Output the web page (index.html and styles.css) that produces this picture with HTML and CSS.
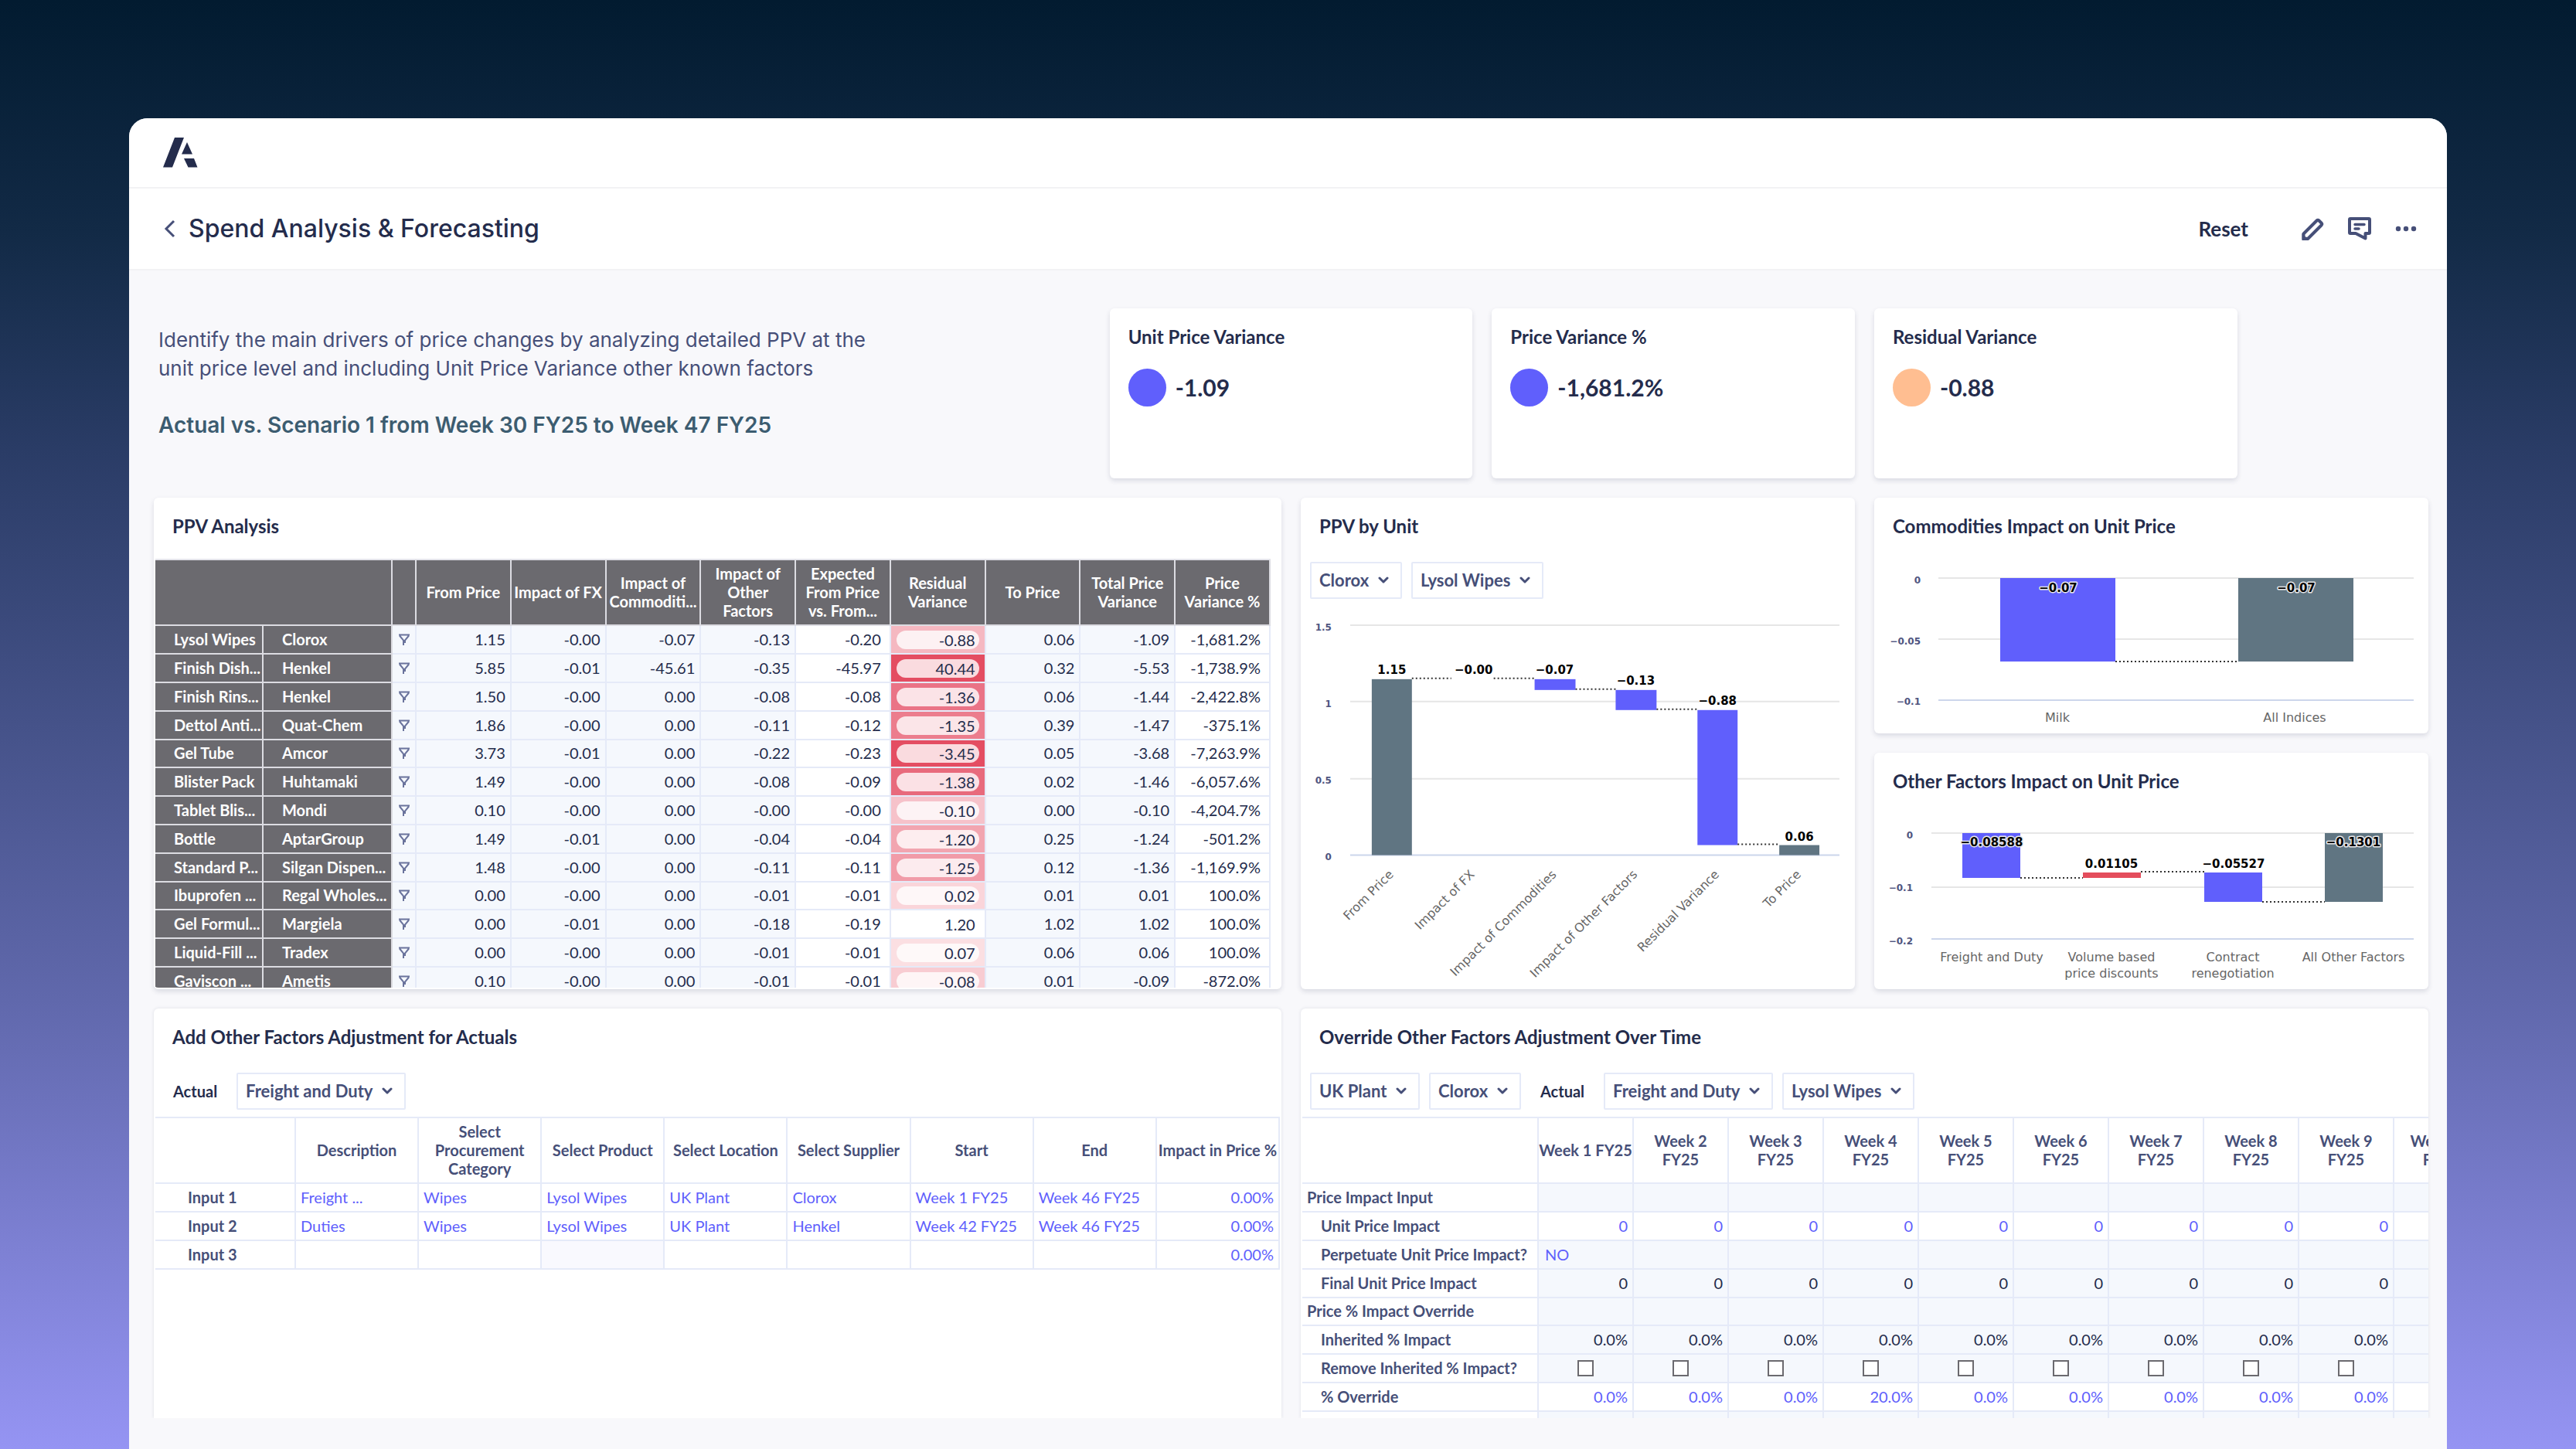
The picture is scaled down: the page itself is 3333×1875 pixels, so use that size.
FILE: index.html
```html
<!DOCTYPE html>
<html lang="en">
<head>
<meta charset="utf-8">
<meta name="viewport" content="width=device-width, initial-scale=1">
<title>Spend Analysis &amp; Forecasting</title>
<link rel="stylesheet" href="styles.css">
</head>
<body>
<svg class="sprite" aria-hidden="true">
  <symbol id="filter" viewBox="0 0 16 16"><path d="M1 1.5h14M2 2.5l5 6V15M14 2.5l-5 6V12" fill="none" stroke="currentColor" stroke-width="2"/></symbol>
  <symbol id="caret" viewBox="0 0 14 10"><path d="M2 2l5 5 5-5" fill="none" stroke="currentColor" stroke-width="3" stroke-linecap="round" stroke-linejoin="round"/></symbol>
</svg>
<div class="app">
  <header class="brand-bar">
    <a href="#" class="brand" aria-label="Home">
      <svg width="45" height="39" viewBox="0 0 45 39" fill="#242c4c"><path d="M15 0h12L12 38.500H0zM31 6l7 15.500H24zM27 27h13l4.500 11.500H32.500z"/></svg>
    </a>
  </header>
  <div class="title-bar">
    <button type="button" class="back" aria-label="Back">
      <svg width="16" height="24" viewBox="0 0 16 24"><path d="M13 2L3 12l10 10" fill="none" stroke="currentColor" stroke-width="3"/></svg>
    </button>
    <h1>Spend Analysis &amp; Forecasting</h1>
    <button type="button" class="reset">Reset</button>
    <button type="button" class="icon-button" aria-label="Edit">
      <svg width="32" height="32" viewBox="0 0 32 32"><path d="M3.500 29v-6.500L20.500 5.500q1.500-1.500 3 0l3 3q1.500 1.500 0 3L9.500 28.500z" fill="none" stroke="currentColor" stroke-width="4" stroke-linejoin="round"/><path d="M1.500 22v9h9z" fill="currentColor"/></svg>
    </button>
    <button type="button" class="icon-button" aria-label="Comments">
      <svg width="32" height="32" viewBox="0 0 32 32"><path d="M4 3h24q1 0 1 1v17q0 1-1 1h-4.500v6.500L11 22H4q-1 0-1-1V4q0-1 1-1z" fill="none" stroke="currentColor" stroke-width="4" stroke-linejoin="round"/><path d="M10 10.500h12M10 16h5" stroke="currentColor" stroke-width="3.500" stroke-linecap="round"/></svg>
    </button>
    <button type="button" class="icon-button" aria-label="More">
      <svg width="28" height="8" viewBox="0 0 28 8" fill="currentColor"><circle cx="4" cy="4" r="3.200"/><circle cx="14" cy="4" r="3.200"/><circle cx="24" cy="4" r="3.200"/></svg>
    </button>
  </div>
  <main class="board">
    <section class="intro">
      <p>Identify the main drivers of price changes by analyzing detailed PPV at the<br>unit price level and including Unit Price Variance other known factors</p>
      <p class="scope">Actual vs. Scenario 1 from Week 30 FY25 to Week 47 FY25</p>
    </section>
    <section class="card kpi">
      <h2>Unit Price Variance</h2>
      <p><span class="dot"></span>-1.09</p>
    </section>
    <section class="card kpi">
      <h2>Price Variance %</h2>
      <p><span class="dot"></span>-1,681.2%</p>
    </section>
    <section class="card kpi">
      <h2>Residual Variance</h2>
      <p><span class="dot warn"></span>-0.88</p>
    </section>

    <section class="card ppv">
      <h2>PPV Analysis</h2>
      <table class="grid ppv-grid">
        <colgroup><col class="c-item"><col class="c-vendor"><col class="c-filter"><col span="9"></colgroup>
        <thead>
          <tr><th colspan="2"></th><th></th><th>From Price</th><th>Impact of FX</th><th>Impact of<br>Commoditi...</th><th>Impact of<br>Other<br>Factors</th><th>Expected<br>From Price<br>vs. From...</th><th>Residual<br>Variance</th><th>To Price</th><th>Total Price<br>Variance</th><th>Price<br>Variance %</th></tr>
        </thead>
        <tbody>
          <tr><th>Lysol Wipes</th><th>Clorox</th><td><svg><use href="#filter"/></svg></td><td>1.15</td><td>-0.00</td><td>-0.07</td><td>-0.13</td><td>-0.20</td><td style="background:#f5b8c1"><span>-0.88</span></td><td>0.06</td><td>-1.09</td><td>-1,681.2%</td></tr>
          <tr><th>Finish Dish...</th><th>Henkel</th><td><svg><use href="#filter"/></svg></td><td>5.85</td><td>-0.01</td><td>-45.61</td><td>-0.35</td><td>-45.97</td><td style="background:#e44d62"><span>40.44</span></td><td>0.32</td><td>-5.53</td><td>-1,738.9%</td></tr>
          <tr><th>Finish Rins...</th><th>Henkel</th><td><svg><use href="#filter"/></svg></td><td>1.50</td><td>-0.00</td><td>0.00</td><td>-0.08</td><td>-0.08</td><td style="background:#ea7386"><span>-1.36</span></td><td>0.06</td><td>-1.44</td><td>-2,422.8%</td></tr>
          <tr><th>Dettol Anti...</th><th>Quat-Chem</th><td><svg><use href="#filter"/></svg></td><td>1.86</td><td>-0.00</td><td>0.00</td><td>-0.11</td><td>-0.12</td><td style="background:#ec7d8d"><span>-1.35</span></td><td>0.39</td><td>-1.47</td><td>-375.1%</td></tr>
          <tr><th>Gel Tube</th><th>Amcor</th><td><svg><use href="#filter"/></svg></td><td>3.73</td><td>-0.01</td><td>0.00</td><td>-0.22</td><td>-0.23</td><td style="background:#e44d62"><span>-3.45</span></td><td>0.05</td><td>-3.68</td><td>-7,263.9%</td></tr>
          <tr><th>Blister Pack</th><th>Huhtamaki</th><td><svg><use href="#filter"/></svg></td><td>1.49</td><td>-0.00</td><td>0.00</td><td>-0.08</td><td>-0.09</td><td style="background:#e86a7c"><span>-1.38</span></td><td>0.02</td><td>-1.46</td><td>-6,057.6%</td></tr>
          <tr><th>Tablet Blis...</th><th>Mondi</th><td><svg><use href="#filter"/></svg></td><td>0.10</td><td>-0.00</td><td>0.00</td><td>-0.00</td><td>-0.00</td><td style="background:#f6c2ca"><span>-0.10</span></td><td>0.00</td><td>-0.10</td><td>-4,204.7%</td></tr>
          <tr><th>Bottle</th><th>AptarGroup</th><td><svg><use href="#filter"/></svg></td><td>1.49</td><td>-0.01</td><td>0.00</td><td>-0.04</td><td>-0.04</td><td style="background:#f2a5b0"><span>-1.20</span></td><td>0.25</td><td>-1.24</td><td>-501.2%</td></tr>
          <tr><th>Standard P...</th><th>Silgan Dispen...</th><td><svg><use href="#filter"/></svg></td><td>1.48</td><td>-0.00</td><td>0.00</td><td>-0.11</td><td>-0.11</td><td style="background:#f19ba8"><span>-1.25</span></td><td>0.12</td><td>-1.36</td><td>-1,169.9%</td></tr>
          <tr><th>Ibuprofen ...</th><th>Regal Wholes...</th><td><svg><use href="#filter"/></svg></td><td>0.00</td><td>-0.00</td><td>0.00</td><td>-0.01</td><td>-0.01</td><td style="background:#fad5da"><span>0.02</span></td><td>0.01</td><td>0.01</td><td>100.0%</td></tr>
          <tr><th>Gel Formul...</th><th>Margiela</th><td><svg><use href="#filter"/></svg></td><td>0.00</td><td>-0.01</td><td>0.00</td><td>-0.18</td><td>-0.19</td><td style="background:#ffffff"><span>1.20</span></td><td>1.02</td><td>1.02</td><td>100.0%</td></tr>
          <tr><th>Liquid-Fill ...</th><th>Tradex</th><td><svg><use href="#filter"/></svg></td><td>0.00</td><td>-0.00</td><td>0.00</td><td>-0.01</td><td>-0.01</td><td style="background:#fbdfe2"><span>0.07</span></td><td>0.06</td><td>0.06</td><td>100.0%</td></tr>
          <tr><th>Gaviscon ...</th><th>Ametis</th><td><svg><use href="#filter"/></svg></td><td>0.10</td><td>-0.00</td><td>0.00</td><td>-0.01</td><td>-0.01</td><td style="background:#f8ccd2"><span>-0.08</span></td><td>0.01</td><td>-0.09</td><td>-872.0%</td></tr>
        </tbody>
      </table>
    </section>

    <section class="card unit">
      <h2>PPV by Unit</h2>
      <div class="selectors">
        <span class="picker"><select aria-label="Supplier"><option>Clorox</option></select><svg><use href="#caret"/></svg></span>
        <span class="picker"><select aria-label="Product"><option>Lysol Wipes</option></select><svg><use href="#caret"/></svg></span>
      </div>
      <svg class="chart" viewBox="0 0 718 505" role="img" aria-label="PPV by Unit waterfall">
        <g class="gridlines"><path d="M64 34h634M64 133h634M64 233h634"/><path class="axis" d="M64 332h634"/></g>
        <g class="ticks"><text x="40" y="41">1.5</text><text x="40" y="140">1</text><text x="40" y="239">0.5</text><text x="40" y="338">0</text></g>
        <g class="total"><rect x="92" y="104" width="52" height="228"/><rect x="620" y="319" width="52" height="13"/></g>
        <g class="delta"><rect x="303" y="104" width="53" height="14"/><rect x="408" y="118" width="53" height="26"/><rect x="514" y="144" width="52" height="175"/></g>
        <path class="links" d="M144 103h51M250 103h53M356 117h52M461 143h53M566 318h54"/>
        <g class="values"><text x="118" y="97">1.15</text><text x="224" y="97">−0.00</text><text x="329" y="97">−0.07</text><text x="434" y="111">−0.13</text><text x="540" y="137">−0.88</text><text x="646" y="313">0.06</text></g>
        <g class="slanted">
          <text transform="translate(121 358) rotate(-45)">From Price</text>
          <text transform="translate(226 358) rotate(-45)">Impact of FX</text>
          <text transform="translate(332 358) rotate(-45)">Impact of Commodities</text>
          <text transform="translate(437 358) rotate(-45)">Impact of Other Factors</text>
          <text transform="translate(543 358) rotate(-45)">Residual Variance</text>
          <text transform="translate(649 358) rotate(-45)">To Price</text>
        </g>
      </svg>
    </section>

    <section class="card commodities">
      <h2>Commodities Impact on Unit Price</h2>
      <svg class="chart" viewBox="0 0 717 252" role="img" aria-label="Commodities impact">
        <g class="gridlines"><path d="M83 51h615M83 130h615"/><path class="axis" d="M83 209h615"/></g>
        <g class="ticks"><text x="60" y="58">0</text><text x="60" y="137">−0.05</text><text x="60" y="215">−0.1</text></g>
        <g class="delta"><rect x="163" y="51" width="149" height="108"/></g>
        <g class="total"><rect x="471" y="51" width="149" height="108"/></g>
        <path class="links" d="M312 159h159"/>
        <g class="values halo"><text x="238" y="69">−0.07</text><text x="546" y="69">−0.07</text></g>
        <g class="names"><text x="237" y="237">Milk</text><text x="544" y="237">All Indices</text></g>
      </svg>
    </section>

    <section class="card factors">
      <h2>Other Factors Impact on Unit Price</h2>
      <svg class="chart" viewBox="0 0 717 252" role="img" aria-label="Other factors impact">
        <g class="gridlines"><path d="M74 51h624M74 121h624"/><path class="axis" d="M74 188h624"/></g>
        <g class="ticks"><text x="50" y="58">0</text><text x="50" y="126">−0.1</text><text x="50" y="195">−0.2</text></g>
        <g class="delta"><rect x="114" y="51" width="75" height="58"/><rect x="427" y="102" width="75" height="38"/></g>
        <rect class="rise" x="270" y="102" width="75" height="7"/>
        <g class="total"><rect x="583" y="51" width="75" height="89"/></g>
        <path class="links" d="M189 109h81M345 101h82M502 140h81"/>
        <g class="values"><text x="307" y="96">0.01105</text><text x="465" y="96">−0.05527</text></g>
        <g class="values halo"><text x="152" y="68">−0.08588</text><text x="620" y="68">−0.1301</text></g>
        <g class="names"><text x="152" y="217">Freight and Duty</text><text x="307" y="217">Volume based</text><text x="307" y="238">price discounts</text><text x="464" y="217">Contract</text><text x="464" y="238">renegotiation</text><text x="620" y="217">All Other Factors</text></g>
      </svg>
    </section>

    <section class="card adjust">
      <h2>Add Other Factors Adjustment for Actuals</h2>
      <div class="selectors">
        <label for="adjust-factor">Actual</label>
        <span class="picker"><select id="adjust-factor"><option>Freight and Duty</option></select><svg><use href="#caret"/></svg></span>
      </div>
      <table class="grid input-grid">
        <colgroup><col class="c-input"><col span="8"></colgroup>
        <thead>
          <tr><th></th><th>Description</th><th>Select<br>Procurement<br>Category</th><th>Select Product</th><th>Select Location</th><th>Select Supplier</th><th>Start</th><th>End</th><th>Impact in Price %</th></tr>
        </thead>
        <tbody>
          <tr><th>Input 1</th><td>Freight ...</td><td>Wipes</td><td>Lysol Wipes</td><td>UK Plant</td><td>Clorox</td><td>Week 1 FY25</td><td>Week 46 FY25</td><td>0.00%</td></tr>
          <tr><th>Input 2</th><td>Duties</td><td>Wipes</td><td>Lysol Wipes</td><td>UK Plant</td><td>Henkel</td><td>Week 42 FY25</td><td>Week 46 FY25</td><td>0.00%</td></tr>
          <tr><th>Input 3</th><td></td><td></td><td class="locked"></td><td></td><td></td><td></td><td></td><td>0.00%</td></tr>
        </tbody>
      </table>
    </section>

    <section class="card override">
      <h2>Override Other Factors Adjustment Over Time</h2>
      <div class="selectors">
        <span class="picker"><select aria-label="Plant"><option>UK Plant</option></select><svg><use href="#caret"/></svg></span>
        <span class="picker"><select aria-label="Supplier"><option>Clorox</option></select><svg><use href="#caret"/></svg></span>
        <label for="override-factor">Actual</label>
        <span class="picker"><select id="override-factor"><option>Freight and Duty</option></select><svg><use href="#caret"/></svg></span>
        <span class="picker"><select aria-label="Product"><option>Lysol Wipes</option></select><svg><use href="#caret"/></svg></span>
      </div>
      <table class="grid week-grid">
        <colgroup><col class="c-line"><col span="10" class="c-week"></colgroup>
        <thead>
          <tr><th></th><th>Week 1 FY25</th><th>Week 2<br>FY25</th><th>Week 3<br>FY25</th><th>Week 4<br>FY25</th><th>Week 5<br>FY25</th><th>Week 6<br>FY25</th><th>Week 7<br>FY25</th><th>Week 8<br>FY25</th><th>Week 9<br>FY25</th><th>Week 10<br>FY25</th></tr>
        </thead>
        <tbody>
          <tr class="group"><th>Price Impact Input</th><td></td><td></td><td></td><td></td><td></td><td></td><td></td><td></td><td></td><td></td></tr>
          <tr class="editable"><th>Unit Price Impact</th><td>0</td><td>0</td><td>0</td><td>0</td><td>0</td><td>0</td><td>0</td><td>0</td><td>0</td><td></td></tr>
          <tr><th>Perpetuate Unit Price Impact?</th><td class="flag">NO</td><td></td><td></td><td></td><td></td><td></td><td></td><td></td><td></td><td></td></tr>
          <tr><th>Final Unit Price Impact</th><td>0</td><td>0</td><td>0</td><td>0</td><td>0</td><td>0</td><td>0</td><td>0</td><td>0</td><td></td></tr>
          <tr class="group"><th>Price % Impact Override</th><td></td><td></td><td></td><td></td><td></td><td></td><td></td><td></td><td></td><td></td></tr>
          <tr><th>Inherited % Impact</th><td>0.0%</td><td>0.0%</td><td>0.0%</td><td>0.0%</td><td>0.0%</td><td>0.0%</td><td>0.0%</td><td>0.0%</td><td>0.0%</td><td></td></tr>
          <tr class="checks"><th>Remove Inherited % Impact?</th><td><input type="checkbox" aria-label="Week 1"></td><td><input type="checkbox" aria-label="Week 2"></td><td><input type="checkbox" aria-label="Week 3"></td><td><input type="checkbox" aria-label="Week 4"></td><td><input type="checkbox" aria-label="Week 5"></td><td><input type="checkbox" aria-label="Week 6"></td><td><input type="checkbox" aria-label="Week 7"></td><td><input type="checkbox" aria-label="Week 8"></td><td><input type="checkbox" aria-label="Week 9"></td><td></td></tr>
          <tr class="editable"><th>% Override</th><td>0.0%</td><td>0.0%</td><td>0.0%</td><td>20.0%</td><td>0.0%</td><td>0.0%</td><td>0.0%</td><td>0.0%</td><td>0.0%</td><td></td></tr>
          <tr><th></th><td></td><td></td><td></td><td></td><td></td><td></td><td></td><td></td><td></td><td></td></tr>
        </tbody>
      </table>
    </section>
  </main>
</div>
</body>
</html>
```

FILE: styles.css
```css
:root {
  --ink: #242c4c;
  --muted: #464f78;
  --accent: #605ffc;
  --slate: #607582;
  --red: #e44d5c;
  --line: #e5eaf8;
  --tint: #f5f8fd;
  --canvas: #f8f8fb;
}

* { box-sizing: border-box; }

body {
  margin: 0;
  min-height: 100vh;
  display: flex;
  padding: 153px 167px 0;
  background: linear-gradient(#021b30 0%, #122a46 16%, #2a3c66 31%, #6068ac 69%, #9594f3 100%);
  color: var(--ink);
  font-family: Lato, "Open Sans", sans-serif;
  font-size: 20px;
  line-height: 24px;
}

h1, h2, p { margin: 0; }

button, select { font: inherit; }

.sprite { position: absolute; width: 0; height: 0; }

.app {
  flex: 1;
  min-width: 0;
  background: var(--canvas);
  border-radius: 24px 24px 0 0;
  overflow: hidden;
}

.brand-bar {
  display: flex;
  align-items: center;
  height: 91px;
  padding: 0 44px;
  background: #fff;
  border-bottom: 2px solid #f2f2f4;
}

.brand { display: flex; }

.title-bar {
  display: flex;
  align-items: center;
  height: 106px;
  padding: 0 23px 0 45px;
  background: #fff;
  border-bottom: 2px solid #f2f2f4;
}

.title-bar button {
  display: flex;
  align-items: center;
  justify-content: center;
  border: 0;
  padding: 0;
  background: none;
  color: var(--muted);
}

.title-bar h1 {
  flex: 1;
  margin-left: 16px;
  font: 500 32px/40px Inter, sans-serif;
}

.title-bar .reset {
  margin-right: 54px;
  color: var(--ink);
  font-size: 26px;
  font-weight: 700;
  line-height: 32px;
}

.title-bar .icon-button { width: 60px; height: 60px; }

.board {
  display: grid;
  grid-template-columns: repeat(12, minmax(0, 1fr));
  grid-template-rows: 220px 305px 306px 530px;
  gap: 25px;
  padding: 49px 24px 40px 32px;
}

.intro {
  grid-column: span 5;
  padding: 22px 0 0 6px;
  color: var(--muted);
  font: 400 26px/37px Inter, sans-serif;
}

.intro .scope {
  margin-top: 37px;
  color: #3c5c70;
  font-size: 28px;
  font-weight: 600;
}

.card {
  overflow: hidden;
  padding-top: 21px;
  background: #fff;
  border-radius: 6px;
  box-shadow: 0 3px 6px rgba(36, 44, 76, 0.14);
}

.card h2 {
  padding: 0 24px;
  font-size: 24px;
  font-weight: 700;
  line-height: 32px;
}

.kpi { grid-column: span 2; }

.kpi p {
  display: flex;
  align-items: center;
  gap: 12px;
  margin: 25px 24px 0;
  font-size: 30px;
  font-weight: 700;
  line-height: 49px;
}

.dot {
  width: 49px;
  height: 49px;
  border-radius: 50%;
  background: var(--accent);
}

.dot.warn { background: #ffbe91; }

.ppv { grid-column: 1 / span 6; grid-row: 2 / span 2; padding-right: 14px; padding-left: 2px; border-bottom: 2px solid #fff; }
.unit { grid-column: 7 / span 3; grid-row: 2 / span 2; }
.commodities { grid-column: 10 / span 3; grid-row: 2; }
.factors { grid-column: 10 / span 3; grid-row: 3; }
.adjust { grid-column: 1 / span 6; grid-row: 4; }
.override { grid-column: 7 / span 6; grid-row: 4; }
.ppv h2 { padding-left: 22px; }

.adjust, .override {
  padding-right: 2px;
  padding-left: 2px;
  border-radius: 6px 6px 0 0;
  box-shadow: 0 0 4px rgba(36, 44, 76, 0.12);
  clip-path: inset(-4px -4px 0 -4px);
}

.adjust h2, .override h2 { padding-left: 22px; }

/* Selector row above charts and grids */
.selectors {
  display: flex;
  align-items: center;
  gap: 12px;
  padding: 30px 12px 0;
}

.adjust .selectors, .override .selectors { padding: 30px 10px 9px; }

.selectors label { margin: 0 13px; font-weight: 700; }

.picker { display: grid; align-items: center; color: var(--muted); }

.picker select {
  grid-area: 1 / 1;
  appearance: none;
  height: 48px;
  margin: 0;
  padding: 0 40px 0 10px;
  border: 2px solid var(--line);
  border-radius: 2px;
  background: #fff;
  color: inherit;
  font-size: 22px;
  font-weight: 700;
}

.picker svg {
  grid-area: 1 / 1;
  justify-self: end;
  width: 14px;
  height: 10px;
  margin-right: 17px;
  pointer-events: none;
}

/* Data grids */
.grid {
  width: 100%;
  table-layout: fixed;
  border-collapse: separate;
  border-spacing: 0;
  border-top: 2px solid var(--line);
}

.grid th, .grid td {
  padding: 0 0 2px;
  border-right: 2px solid var(--line);
  border-bottom: 2px solid var(--line);
  overflow: hidden;
  white-space: nowrap;
}

.grid th { color: var(--muted); font-weight: 700; }
.grid thead th { height: 85px; text-align: center; }
.grid tbody tr { height: 37px; }
.grid tbody tr:nth-child(5n) { height: 36px; }
.grid tbody th { text-align: left; }
.grid td { text-align: right; padding-right: 6px; }

.ppv-grid { margin-top: 26px; border-top-color: #e4e4ea; }
.ppv-grid th { background: #6b6a6f; color: #fff; border-color: #dcdce2; }
.ppv-grid tbody th { padding-left: 24px; }
.ppv-grid td { background: var(--tint); }
.ppv-grid td:nth-child(3) { padding: 0; text-align: center; }
.ppv-grid td:nth-child(8), .ppv-grid td:nth-child(12) { background: #fff; padding-right: 11px; }
.ppv-grid td:nth-child(9) { padding: 0 7px; }

.ppv-grid td:nth-child(9) span {
  display: block;
  padding-right: 5px;
  border-radius: 12px;
  background: rgba(255, 255, 255, 0.8);
}

.ppv-grid td svg { display: block; width: 16px; height: 16px; margin: 0 auto; color: #6a739c; }

.c-item { width: 140px; }
.c-vendor { width: 167px; }
.c-filter { width: 31px; }
.c-input { width: 182px; }
.c-line { width: 306px; }
.c-week { width: 123px; }

.input-grid tbody th { padding-left: 42px; }
.input-grid td { padding-left: 6px; color: var(--accent); text-align: left; }
.input-grid td:last-child { text-align: right; }
.input-grid .locked { background: #f9f9fe; }

.week-grid { width: 1536px; }
.week-grid tbody th { padding-left: 24px; }
.week-grid .group th { padding-left: 6px; }
.week-grid td { background: var(--tint); }
.week-grid .editable td { background: #fff; color: var(--accent); }
.week-grid .flag { padding-left: 8px; color: var(--accent); text-align: left; }
.week-grid .checks td { padding: 0; text-align: center; }

.week-grid input {
  appearance: none;
  display: block;
  width: 21px;
  height: 21px;
  margin: 0 auto;
  border: 2px solid #6b6a6f;
  background: #fff;
}

/* Charts */
.chart { display: block; width: 100%; font-family: "DejaVu Sans", sans-serif; }
.gridlines path { stroke: #e6e6e6; stroke-width: 2; }
.gridlines .axis { stroke: #ccd6eb; }
.ticks text { fill: #4f5580; font-size: 12px; font-weight: 700; text-anchor: end; }
.total { fill: var(--slate); }
.delta { fill: var(--accent); }
.rise { fill: var(--red); }
.links { fill: none; stroke: #333; stroke-width: 2; stroke-dasharray: 2 3; }
.values text { fill: #000; font-size: 15px; font-weight: 700; text-anchor: middle; }
.values.halo text { stroke: #e8e8ea; stroke-width: 3px; stroke-linejoin: round; paint-order: stroke; }
.names text, .slanted text { fill: #666; font-size: 16px; }
.names text { text-anchor: middle; }
.slanted text { text-anchor: end; }
```
